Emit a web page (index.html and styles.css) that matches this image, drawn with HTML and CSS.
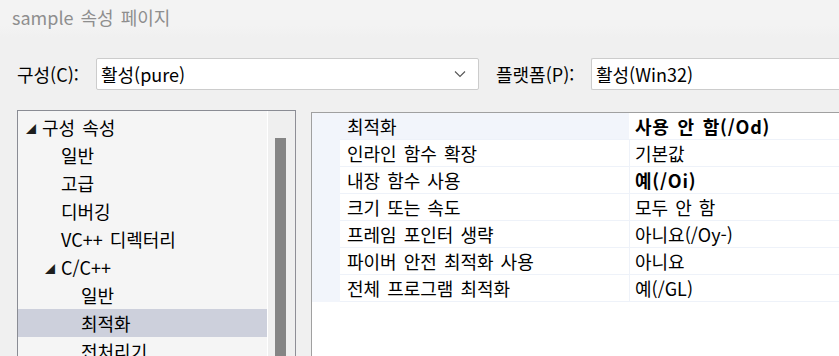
FILE: index.html
```html
<!doctype html>
<html lang="ko">
  <head>
    <meta charset="UTF-8" />
    <title>sample 속성 페이지</title>
    <link rel="stylesheet" href="styles.css">
  </head>
  <body>
    <div class="titlebar">sample 속성 페이지</div>

    <div class="config-row">
      <label class="config-label">구성(C):</label>
      <div class="combo combo-config">
        <span>활성(pure)</span>
        <svg class="chevron" width="12" height="8" viewBox="0 0 12 8">
          <path d="M1 1.5 L6 6.5 L11 1.5" fill="none" stroke="#555" stroke-width="1.1" />
        </svg>
      </div>
      <label class="config-label platform-label">플랫폼(P):</label>
      <div class="combo combo-platform">
        <span>활성(Win32)</span>
      </div>
    </div>

    <div class="main">
      <div class="tree">
        <ul class="tree-list">
          <li class="node level-0"><span class="arrow">◢</span>구성 속성</li>
          <li class="node level-1">일반</li>
          <li class="node level-1">고급</li>
          <li class="node level-1">디버깅</li>
          <li class="node level-1">VC++ 디렉터리</li>
          <li class="node level-1 has-arrow"><span class="arrow">◢</span>C/C++</li>
          <li class="node level-2">일반</li>
          <li class="node level-2 selected">최적화</li>
          <li class="node level-2">전처리기</li>
        </ul>
        <div class="scrollbar">
          <div class="scroll-up"></div>
          <div class="scroll-thumb"></div>
        </div>
      </div>

      <div class="grid">
        <div class="grid-rows">
          <div class="prop first">
            <div class="prop-name">최적화</div>
            <div class="prop-value bold">사용 안 함(/Od)</div>
          </div>
          <div class="prop">
            <div class="prop-name">인라인 함수 확장</div>
            <div class="prop-value">기본값</div>
          </div>
          <div class="prop">
            <div class="prop-name">내장 함수 사용</div>
            <div class="prop-value bold">예(/Oi)</div>
          </div>
          <div class="prop">
            <div class="prop-name">크기 또는 속도</div>
            <div class="prop-value">모두 안 함</div>
          </div>
          <div class="prop">
            <div class="prop-name">프레임 포인터 생략</div>
            <div class="prop-value">아니요(/Oy-)</div>
          </div>
          <div class="prop">
            <div class="prop-name">파이버 안전 최적화 사용</div>
            <div class="prop-value">아니요</div>
          </div>
          <div class="prop">
            <div class="prop-name">전체 프로그램 최적화</div>
            <div class="prop-value">예(/GL)</div>
          </div>
        </div>
      </div>
    </div>
  </body>
</html>
```

FILE: styles.css
```css
* {
  margin: 0;
  padding: 0;
  box-sizing: border-box;
}

body {
  font-family: "Noto Sans CJK KR", "Noto Sans", sans-serif;
  font-size: 18px;
  word-spacing: 2px;
  color: #000000;
  background: #f0f0f0;
  width: 839px;
  height: 356px;
  overflow: hidden;
}

.titlebar {
  height: 37px;
  padding-left: 12px;
  line-height: 34px;
  color: #8e8e8e;
  background: linear-gradient(180deg, #f3f3f3 0%, #f3f3f3 70%, #f0f0f0 100%);
}

.config-row {
  display: flex;
  align-items: center;
  margin-top: 21px;
  height: 32px;
  padding-left: 17px;
}

.config-label {
  width: 79px;
  line-height: 32px;
  white-space: nowrap;
}

.platform-label {
  width: 95px;
  margin-left: 17px;
}

.combo {
  height: 32px;
  background: #ffffff;
  border: 1px solid #cccccc;
  border-radius: 2px;
  display: flex;
  align-items: center;
  padding-left: 4px;
}

.combo-config {
  width: 383px;
  justify-content: space-between;
  padding-right: 12px;
}

.combo-platform {
  flex: 1;
  border-right: none;
  border-radius: 2px 0 0 2px;
}

.chevron {
  display: block;
}

.main {
  display: flex;
  align-items: flex-start;
  margin-top: 20px;
  padding-left: 17px;
}

.tree {
  width: 279px;
  height: 246px;
  border: 1px solid #8a8c94;
  border-right-color: #8e8e96;
  border-bottom: none;
  background: #f5f5f5;
  display: flex;
  overflow: hidden;
}

.tree-list {
  list-style: none;
  width: 250px;
  padding-top: 2px;
  border-right: 1px solid #ffffff;
}

.node {
  height: 28px;
  line-height: 28px;
  white-space: nowrap;
}

.level-0 {
  padding-left: 8px;
}

.level-1 {
  padding-left: 43px;
}

.level-1.has-arrow {
  padding-left: 27px;
}

.level-2 {
  padding-left: 63px;
}

.selected {
  background: #cdd0dc;
}

.arrow {
  display: inline-block;
  width: 16px;
  font-size: 10px;
  color: #1e1e1e;
  vertical-align: 2px;
}

.scrollbar {
  flex: 1;
  background: #efefef;
}

.scroll-up {
  height: 27px;
}

.scroll-thumb {
  width: 11px;
  height: 240px;
  margin-left: 7px;
  background: #858585;
}

.grid {
  flex: 1;
  height: 244px;
  margin-left: 15px;
  margin-top: 2px;
  border-left: 1px solid #a0a0a0;
  border-top: 1px solid #a0a0a0;
  background: #ffffff;
}

.grid-rows {
  background: #f2f5fb;
  padding-left: 28px;
}

.prop {
  display: flex;
  height: 27px;
  border-bottom: 1px solid #eef2f9;
}

.prop-name {
  width: 290px;
  padding-left: 7px;
  line-height: 26px;
  background: #ffffff;
  border-right: 1px solid #eef2f9;
  white-space: nowrap;
}

.first .prop-name {
  background: #f2f5fb;
  border-right-color: #ffffff;
}

.prop-value {
  flex: 1;
  padding-left: 5px;
  line-height: 26px;
  background: #ffffff;
  white-space: nowrap;
}

.bold {
  font-weight: bold;
  letter-spacing: 0.8px;
}
```
